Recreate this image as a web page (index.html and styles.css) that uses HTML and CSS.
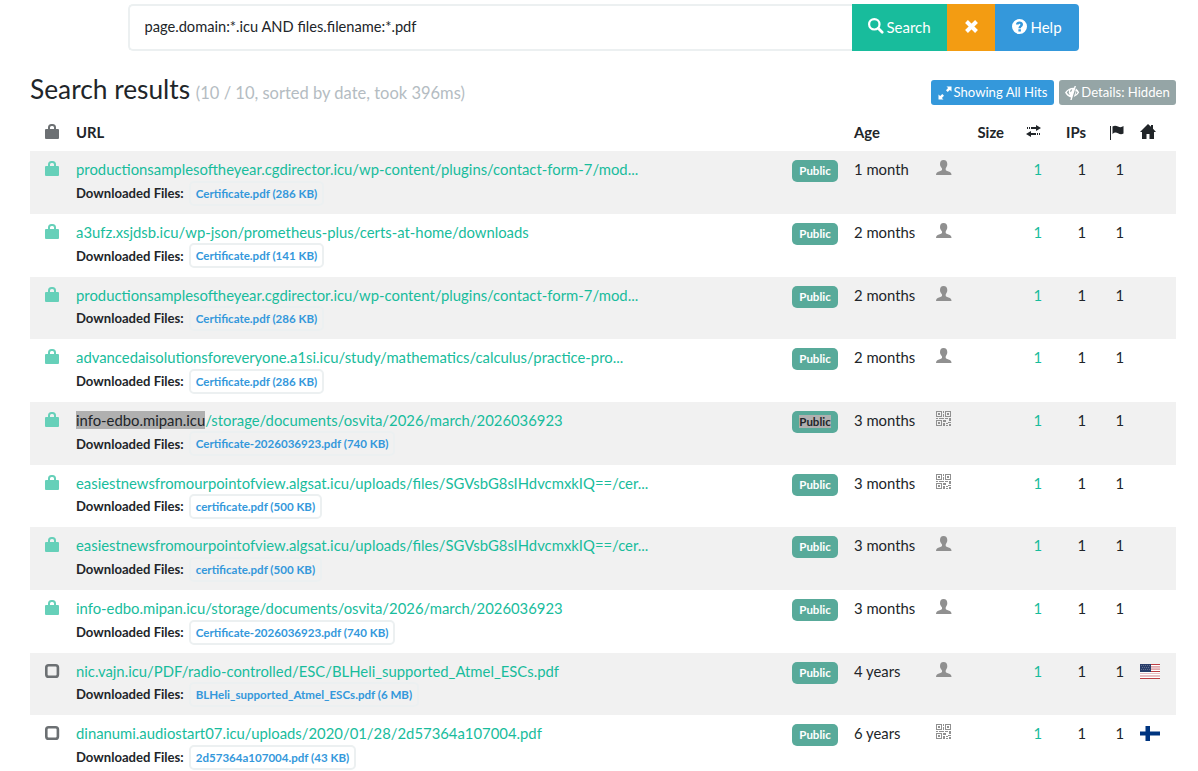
FILE: index.html
```
<!DOCTYPE html>
<html lang="en">
<head>
    <meta charset="UTF-8">
    <meta name="viewport" content="width=device-width, initial-scale=1.0">
    <title>Search results</title>
    <link rel="stylesheet" href="styles.css">
</head>
<body>
    <svg class="sprite">
        <symbol id="lock" viewBox="0 0 15 15"><path fill-rule="evenodd" d="M3 5V3.500Q3 0 6.500 0h1Q11 0 11 3.500V5h2q1 0 1 1v8q0 1-1 1H1q-1 0-1-1V6q0-1 1-1zM5 5h4V3.500Q9 2 7.500 2h-1Q5 2 5 3.500z"/></symbol>
        <symbol id="unchecked" viewBox="0 0 15 15"><rect x="1.300" y="2.300" width="11.600" height="11.400" rx="2.300" fill="none" stroke="currentColor" stroke-width="2.600"/></symbol>
        <symbol id="search" viewBox="0 0 16 16"><circle cx="6.300" cy="6.300" r="5.200" fill="none" stroke="currentColor" stroke-width="2.200"/><path d="M10.200 10.200l4 4" fill="none" stroke="currentColor" stroke-width="2.700" stroke-linecap="round"/></symbol>
        <symbol id="remove" viewBox="0 0 13 13"><path d="M1.500 1.500l10 10M11.500 1.500l-10 10" fill="none" stroke="currentColor" stroke-width="4"/></symbol>
        <symbol id="question" viewBox="0 0 15 15"><path fill-rule="evenodd" d="M7.500 0a7.500 7.500 0 1 0 0 15a7.500 7.500 0 1 0 0-15zM4 5.500C4 3.500 5.500 2.500 7.500 2.500S11 3.600 11 5.400C11 7.500 8.900 7.700 8.900 9.200H6.400C6.400 7 8.400 6.800 8.400 5.500C8.400 4.500 6.600 4.500 6.600 5.500zM6.400 10.200h2.500v2.300H6.400z"/></symbol>
        <symbol id="resize" viewBox="0 0 14 14"><path d="M8.500 0.500h5v5l-1.700-1.600L9.700 6 8 4.300l2.100-2.200zM0.500 8.500l1.700 1.600L4.300 8 6 9.700 3.900 11.900 5.500 13.500h-5z"/></symbol>
        <symbol id="eye-close" viewBox="0 0 15 14"><path d="M0 6.500Q3.500 1.500 9 1.800L9.600 0H11L6.700 14H5.300L6 11.500Q2 10.500 0 6.500zM1.800 6.500Q3 8.600 5 9.300Q3 6.500 4 4.200Q2.500 5.200 1.800 6.500zM5.600 4Q4.700 5.200 5.700 6.300Q6.700 5 7.300 3.200Q6.300 3.200 5.600 4z" fill-rule="evenodd"/><path d="M11 2.400Q13.200 4 14.200 6.500Q12.500 9.500 8.800 11L10 7.500Q11.300 5.800 10.300 4.600zM11.600 5L10.400 8.700Q11.800 7.800 12.500 6.500z" fill-rule="evenodd"/></symbol>
        <symbol id="transfer" viewBox="0 0 16 13"><path d="M1 2h1v2H1zM3 2h1v2H3zM5 2h5V0l5 3-5 3V4H5zM5 8h5v2H5v2L0 9l5-3zM11 8h1v2h-1zM13 8h1v2h-1z"/></symbol>
        <symbol id="flag" viewBox="0 0 14 15"><path d="M0 1h1v14H0zM2.500 1.500Q5 0 8 1.500T13.500 1v7.500Q11 10 8 8.300T2.500 9z"/></symbol>
        <symbol id="home" viewBox="0 0 16 15"><path d="M8 0l3 2.800V1h2v3.800L16 8h-2v7H9.500v-5h-3v5H2V8H0z"/></symbol>
        <symbol id="user" viewBox="0 0 16 15"><path d="M7.500 0C10 0 11.300 1.500 11.300 4.300 11.300 6.500 10 7.600 9.700 8.600V10q.3.800 2.800 1.500Q15.500 12.300 15.500 15H0q0-2.700 3-3.500Q5.500 10.800 6 10V8.600C5.500 7.600 4 6.500 4 4.300 4 1.500 5.200 0 7.500 0z"/></symbol>
        <symbol id="qrcode" viewBox="0 0 16 15"><path fill-rule="evenodd" d="M0 0h6v6H0zM1 1v4h4V1zM2 2h2v2H2zM9 0h6v6H9zM10 1v4h4V1zM11 2h2v2h-2zM0 9h6v6H0zM1 10v4h4v-4zM2 11h2v2H2zM7 0h1v2H7zM7 3h1v3H7zM0 7h2v1H0zM3 7h5v1H3zM7 9h3v2H7zM9 7h3v1H9zM13 7h2v3h-2zM7 12h2v3H7zM10 12h2v1h-2zM10 14h2v1h-2zM12 11h3v1h-3zM13 13h2v2h-2z"/></symbol>
    </svg>

    <form class="search-form">
        <input type="text" class="search-input" value="page.domain:*.icu AND files.filename:*.pdf">
        <button type="button" class="btn btn-search"><svg width="16" height="16"><use href="#search"/></svg>Search</button>
        <button type="button" class="btn btn-clear"><svg width="13" height="13"><use href="#remove"/></svg></button>
        <button type="button" class="btn btn-help"><svg width="15" height="15"><use href="#question"/></svg>Help</button>
    </form>

    <div class="container">
        <div class="heading">
            <h2>Search results <small>(10 / 10, sorted by date, took 396ms)</small></h2>
            <div class="toggles">
                <a class="btn-sm btn-hits"><svg width="14" height="14"><use href="#resize"/></svg>Showing All Hits</a>
                <a class="btn-sm btn-details"><svg width="15" height="14"><use href="#eye-close"/></svg>Details: Hidden</a>
            </div>
        </div>

        <table class="results">
            <colgroup>
                <col class="col-lock"><col class="col-url"><col class="col-badge"><col class="col-age"><col class="col-user">
                <col class="col-size"><col class="col-req"><col class="col-ips"><col class="col-flag"><col class="col-home">
            </colgroup>
            <thead>
                <tr>
                    <th class="lock"><svg width="15" height="15"><use href="#lock"/></svg></th>
                    <th>URL</th>
                    <th></th>
                    <th>Age</th>
                    <th></th>
                    <th class="num">Size</th>
                    <th class="num"><svg width="16" height="13"><use href="#transfer"/></svg></th>
                    <th class="num">IPs</th>
                    <th class="num"><svg width="14" height="15"><use href="#flag"/></svg></th>
                    <th class="home"><svg width="16" height="15"><use href="#home"/></svg></th>
                </tr>
            </thead>
            <tbody>
                <tr>
                    <td class="lock secure"><svg width="15" height="15"><use href="#lock"/></svg></td>
                    <td><a class="url">productionsamplesoftheyear.cgdirector.icu/wp-content/plugins/contact-form-7/mod...</a><div class="files"><b>Downloaded Files:</b><a class="file">Certificate.pdf (286 KB)</a></div></td>
                    <td><span class="badge">Public</span></td>
                    <td>1 month</td>
                    <td class="source"><svg width="16" height="15"><use href="#user"/></svg></td>
                    <td></td><td class="num req">1</td><td class="num">1</td><td class="num">1</td><td></td>
                </tr>
                <tr>
                    <td class="lock secure"><svg width="15" height="15"><use href="#lock"/></svg></td>
                    <td><a class="url">a3ufz.xsjdsb.icu/wp-json/prometheus-plus/certs-at-home/downloads</a><div class="files"><b>Downloaded Files:</b><a class="file">Certificate.pdf (141 KB)</a></div></td>
                    <td><span class="badge">Public</span></td>
                    <td>2 months</td>
                    <td class="source"><svg width="16" height="15"><use href="#user"/></svg></td>
                    <td></td><td class="num req">1</td><td class="num">1</td><td class="num">1</td><td></td>
                </tr>
                <tr>
                    <td class="lock secure"><svg width="15" height="15"><use href="#lock"/></svg></td>
                    <td><a class="url">productionsamplesoftheyear.cgdirector.icu/wp-content/plugins/contact-form-7/mod...</a><div class="files"><b>Downloaded Files:</b><a class="file">Certificate.pdf (286 KB)</a></div></td>
                    <td><span class="badge">Public</span></td>
                    <td>2 months</td>
                    <td class="source"><svg width="16" height="15"><use href="#user"/></svg></td>
                    <td></td><td class="num req">1</td><td class="num">1</td><td class="num">1</td><td></td>
                </tr>
                <tr>
                    <td class="lock secure"><svg width="15" height="15"><use href="#lock"/></svg></td>
                    <td><a class="url">advancedaisolutionsforeveryone.a1si.icu/study/mathematics/calculus/practice-pro...</a><div class="files"><b>Downloaded Files:</b><a class="file">Certificate.pdf (286 KB)</a></div></td>
                    <td><span class="badge">Public</span></td>
                    <td>2 months</td>
                    <td class="source"><svg width="16" height="15"><use href="#user"/></svg></td>
                    <td></td><td class="num req">1</td><td class="num">1</td><td class="num">1</td><td></td>
                </tr>
                <tr>
                    <td class="lock secure"><svg width="15" height="15"><use href="#lock"/></svg></td>
                    <td><a class="url"><mark>info-edbo.mipan.icu</mark>/storage/documents/osvita/2026/march/2026036923</a><div class="files"><b>Downloaded Files:</b><a class="file">Certificate-2026036923.pdf (740 KB)</a></div></td>
                    <td><span class="badge"><mark>Public</mark></span></td>
                    <td>3 months</td>
                    <td class="source"><svg width="16" height="15"><use href="#qrcode"/></svg></td>
                    <td></td><td class="num req">1</td><td class="num">1</td><td class="num">1</td><td></td>
                </tr>
                <tr>
                    <td class="lock secure"><svg width="15" height="15"><use href="#lock"/></svg></td>
                    <td><a class="url">easiestnewsfromourpointofview.algsat.icu/uploads/files/SGVsbG8sIHdvcmxkIQ==/cer...</a><div class="files"><b>Downloaded Files:</b><a class="file">certificate.pdf (500 KB)</a></div></td>
                    <td><span class="badge">Public</span></td>
                    <td>3 months</td>
                    <td class="source"><svg width="16" height="15"><use href="#qrcode"/></svg></td>
                    <td></td><td class="num req">1</td><td class="num">1</td><td class="num">1</td><td></td>
                </tr>
                <tr>
                    <td class="lock secure"><svg width="15" height="15"><use href="#lock"/></svg></td>
                    <td><a class="url">easiestnewsfromourpointofview.algsat.icu/uploads/files/SGVsbG8sIHdvcmxkIQ==/cer...</a><div class="files"><b>Downloaded Files:</b><a class="file">certificate.pdf (500 KB)</a></div></td>
                    <td><span class="badge">Public</span></td>
                    <td>3 months</td>
                    <td class="source"><svg width="16" height="15"><use href="#user"/></svg></td>
                    <td></td><td class="num req">1</td><td class="num">1</td><td class="num">1</td><td></td>
                </tr>
                <tr>
                    <td class="lock secure"><svg width="15" height="15"><use href="#lock"/></svg></td>
                    <td><a class="url">info-edbo.mipan.icu/storage/documents/osvita/2026/march/2026036923</a><div class="files"><b>Downloaded Files:</b><a class="file">Certificate-2026036923.pdf (740 KB)</a></div></td>
                    <td><span class="badge">Public</span></td>
                    <td>3 months</td>
                    <td class="source"><svg width="16" height="15"><use href="#user"/></svg></td>
                    <td></td><td class="num req">1</td><td class="num">1</td><td class="num">1</td><td></td>
                </tr>
                <tr>
                    <td class="lock"><svg width="15" height="15"><use href="#unchecked"/></svg></td>
                    <td><a class="url">nic.vajn.icu/PDF/radio-controlled/ESC/BLHeli_supported_Atmel_ESCs.pdf</a><div class="files"><b>Downloaded Files:</b><a class="file">BLHeli_supported_Atmel_ESCs.pdf (6 MB)</a></div></td>
                    <td><span class="badge">Public</span></td>
                    <td>4 years</td>
                    <td class="source"><svg width="16" height="15"><use href="#user"/></svg></td>
                    <td></td><td class="num req">1</td><td class="num">1</td><td class="num">1</td>
                    <td class="country"><svg width="20" height="15" viewBox="0 0 20 15" shape-rendering="crispEdges">
                        <path fill="#fff" d="M0 0h20v15H0z"/>
                        <path fill="#bd3d44" d="M0 0h20v1H0zM0 7h20v1H0zM0 14h20v1H0z"/>
                        <path fill="#e8bfc4" d="M0 3h20v2H0zM0 9h20v1H0zM0 11h20v2H0z"/>
                        <path fill="#bd3d44" d="M0 5h20v1H0zM0 2h20v1H0z" opacity=".45"/>
                        <path fill="#293e6b" d="M0 0h11v8H0z"/>
                        <path fill="none" stroke="#62708f" stroke-dasharray="1 1" d="M1 1.500h9M2 3.500h8M1 5.500h9"/>
                    </svg></td>
                </tr>
                <tr>
                    <td class="lock"><svg width="15" height="15"><use href="#unchecked"/></svg></td>
                    <td><a class="url">dinanumi.audiostart07.icu/uploads/2020/01/28/2d57364a107004.pdf</a><div class="files"><b>Downloaded Files:</b><a class="file">2d57364a107004.pdf (43 KB)</a></div></td>
                    <td><span class="badge">Public</span></td>
                    <td>6 years</td>
                    <td class="source"><svg width="16" height="15"><use href="#qrcode"/></svg></td>
                    <td></td><td class="num req">1</td><td class="num">1</td><td class="num">1</td>
                    <td class="country"><svg width="20" height="15" viewBox="0 0 20 15">
                        <path fill="#fff" d="M0 0h20v15H0z"/>
                        <path fill="#003580" d="M0 5.400h20v4.200H0zM5.500 0H10v15H5.500z"/>
                    </svg></td>
                </tr>
            </tbody>
        </table>
    </div>
</body>
</html>
```
FILE: styles.css
```
* {
    box-sizing: border-box;
}

body {
    margin: 0;
    height: 771px;
    overflow: hidden;
    background-color: #fff;
    color: #212529;
    font-family: Lato, "Liberation Sans", sans-serif;
    font-size: 15px;
    line-height: 22.5px;
}

svg {
    fill: currentColor;
}

.sprite {
    display: none;
}

.search-form {
    display: flex;
    width: 951px;
    height: 47px;
    margin: 4px 0 0 128px;
}

.search-input {
    flex: 1;
    min-width: 0;
    border: 2px solid #ecf0f1;
    border-right: none;
    border-radius: 5px 0 0 5px;
    padding: 0 14.5px;
    color: #212529;
    font: inherit;
    font-size: 14.65px;
    outline: none;
}

.btn {
    display: flex;
    align-items: center;
    justify-content: center;
    gap: 3px;
    border: none;
    padding: 0;
    color: #fff;
    font: inherit;
}

.btn svg {
    margin-top: -3px;
}

.btn-search {
    gap: 2px;
    width: 95px;
    background-color: #18bc9c;
}

.btn-clear {
    width: 48px;
    background-color: #f39c12;
}

.btn-help {
    width: 84px;
    border-radius: 0 4px 4px 0;
    background-color: #3498db;
}

.container {
    width: 1146px;
    margin-left: 30px;
}

.heading {
    display: flex;
    justify-content: space-between;
    height: 63px;
    padding-top: 22px;
}

h2 {
    margin: 0;
    font-size: 26.3px;
    font-weight: 400;
    line-height: 32px;
}

h2 small {
    margin-left: -1px;
    color: #b4bcc2;
    font-size: 16.5px;
}

.toggles {
    display: flex;
    gap: 5px;
    padding-top: 7px;
}

.btn-sm {
    display: flex;
    align-items: center;
    justify-content: center;
    gap: 2px;
    height: 25px;
    border-radius: 3px;
    color: #fff;
    font-size: 13.1px;
}

.btn-hits {
    width: 123px;
    background-color: #3498db;
}

.btn-details {
    gap: 1px;
    width: 117px;
    background-color: #95a5a6;
}

.results {
    width: 100%;
    table-layout: fixed;
    border-collapse: collapse;
    font-size: 14.85px;
}

.col-lock { width: 41px; }
.col-badge { width: 62px; }
.col-age { width: 81px; }
.col-user { width: 34px; }
.col-size { width: 45px; }
.col-req { width: 38px; }
.col-ips { width: 44px; }
.col-flag { width: 38px; }
.col-home { width: 47px; }

th,
td {
    padding: 7px 5px 0;
    text-align: left;
    vertical-align: top;
    white-space: nowrap;
}

th {
    height: 37.2px;
    font-weight: 700;
}

td {
    height: 62.7px;
}

tbody tr:nth-child(odd) {
    background-color: #f1f1f1;
}

th svg,
td svg {
    display: block;
}

.lock {
    padding: 10px 0 0 15px;
    color: #6c7073;
}

.secure {
    color: #66d0b9;
}

.num {
    padding-right: 5px;
    text-align: right;
}

th.num svg {
    margin: 4px 0 0 auto;
}

th.home {
    padding: 10px 0 0 11px;
}

.url,
.req {
    color: #18bc9c;
}

.files {
    display: flex;
    align-items: center;
    gap: 5px;
    height: 25px;
    font-size: 13.1px;
}

.file {
    height: 25px;
    border: 2px solid #ecf0f1;
    border-radius: 5px;
    padding: 0 5px;
    color: #3498db;
    font-size: 11.55px;
    font-weight: 700;
    line-height: 21px;
}

.badge {
    display: block;
    width: 46px;
    height: 22px;
    margin-top: 2px;
    border-radius: 5px;
    background-color: #58aa9a;
    color: #fff;
    font-size: 11.5px;
    font-weight: 700;
    line-height: 22px;
    text-align: center;
}

mark {
    background-color: #b0b0b0;
    color: #212529;
}

.source {
    padding: 9px 0 0 6px;
    color: #909090;
}

.country {
    padding: 11px 0 0 11px;
}
```
